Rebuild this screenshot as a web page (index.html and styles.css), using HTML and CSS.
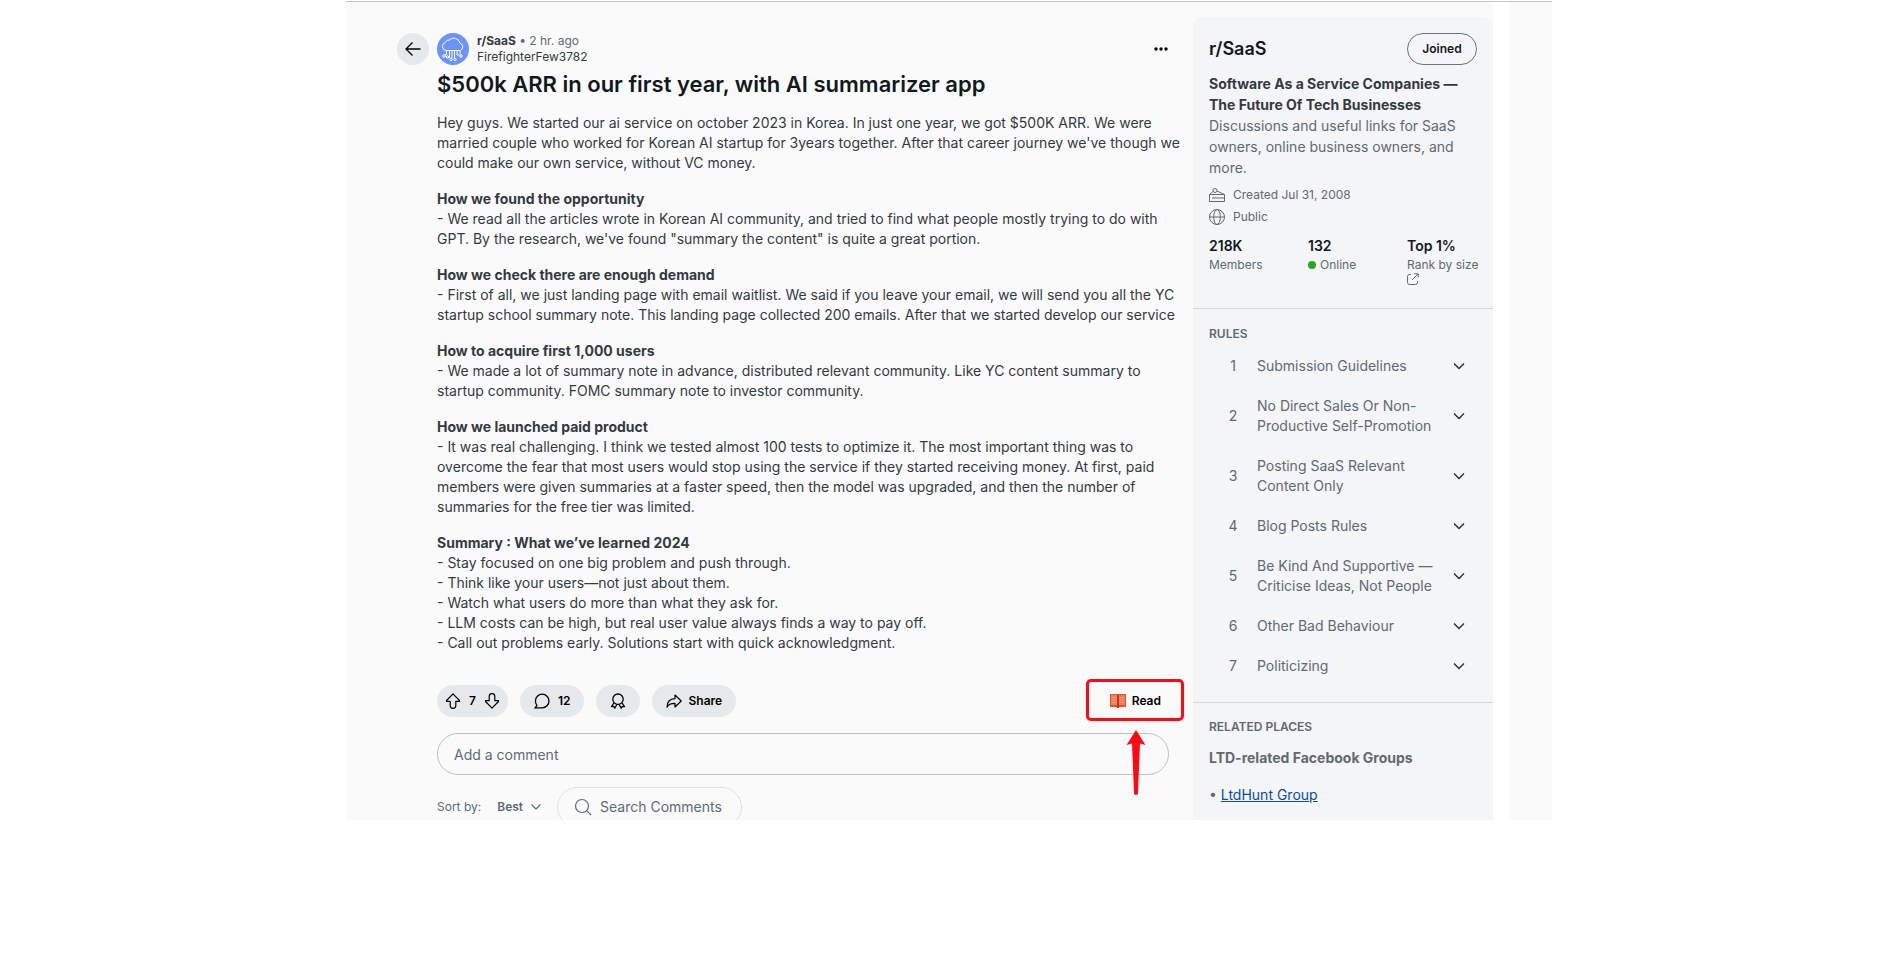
FILE: index.html
```html
<!DOCTYPE html>
<html lang="en">
<head>
<meta charset="utf-8">
<title>$500k ARR in our first year, with AI summarizer app</title>
<link rel="stylesheet" href="styles.css">
</head>
<body>
<div class="panel">
  <main class="main">
    <button class="round-btn" type="button" aria-label="Back">
      <svg width="20" height="20" viewBox="0 0 20 20" fill="none" stroke="currentColor" stroke-width="1.3"><path d="M17.5 10H3M9.5 3.5L3 10l6.500 6.500"/></svg>
    </button>
    <article class="post">
      <header class="post-head">
        <svg class="avatar" width="32" height="32" viewBox="0 0 32 32" fill="none" stroke="#fff" stroke-width="1"><circle cx="16" cy="16" r="16" fill="#6a93fb" stroke="none"/><path d="M9 17.500a4.200 4.200 0 0 1-.5-8.200 3.600 3.600 0 0 1 4-2.300 6 6 0 0 1 10.300 3 4 4 0 0 1 .5 7.500z"/><path d="M9.500 18v3.500H8M12.500 18v7M15 18v7M17.500 18v7M20 18v4h2M23 18v3.500"/><circle cx="7" cy="23" r="1.300"/><circle cx="10.500" cy="24" r="1.200"/><circle cx="14" cy="26.500" r="1.200"/><circle cx="18" cy="26.500" r="1.200"/><circle cx="24" cy="23" r="1.300"/></svg>
        <div class="meta">
          <div><strong>r/SaaS</strong> <span class="muted">• 2 hr. ago</span></div>
          <div>FirefighterFew3782</div>
        </div>
        <button class="more" type="button" aria-label="More options"><svg width="16" height="16" viewBox="0 0 16 16" fill="currentColor"><circle cx="3" cy="8" r="1.700"/><circle cx="8" cy="8" r="1.700"/><circle cx="13" cy="8" r="1.700"/></svg></button>
      </header>
      <h1>$500k ARR in our first year, with AI summarizer app</h1>
      <div class="body">
        <p>Hey guys. We started our ai service on october 2023 in Korea. In just one year, we got $500K ARR. We were<br>married couple who worked for Korean AI startup for 3years together. After that career journey we've though we<br>could make our own service, without VC money.</p>
        <p><strong>How we found the opportunity</strong><br>- We read all the articles wrote in Korean AI community, and tried to find what people mostly trying to do with<br>GPT. By the research, we've found "summary the content" is quite a great portion.</p>
        <p><strong>How we check there are enough demand</strong><br>- First of all, we just landing page with email waitlist. We said if you leave your email, we will send you all the YC<br>startup school summary note. This landing page collected 200 emails. After that we started develop our service</p>
        <p><strong>How to acquire first 1,000 users</strong><br>- We made a lot of summary note in advance, distributed relevant community. Like YC content summary to<br>startup community. FOMC summary note to investor community.</p>
        <p><strong>How we launched paid product</strong><br>- It was real challenging. I think we tested almost 100 tests to optimize it. The most important thing was to<br>overcome the fear that most users would stop using the service if they started receiving money. At first, paid<br>members were given summaries at a faster speed, then the model was upgraded, and then the number of<br>summaries for the free tier was limited.</p>
        <p><strong>Summary : What we’ve learned 2024</strong><br>- Stay focused on one big problem and push through.<br>- Think like your users—not just about them.<br>- Watch what users do more than what they ask for.<br>- LLM costs can be high, but real user value always finds a way to pay off.<br>- Call out problems early. Solutions start with quick acknowledgment.</p>
      </div>
      <div class="actions">
        <div class="pill votes">
          <button type="button" aria-label="Upvote"><svg width="16" height="16" viewBox="0 0 16 16" fill="none" stroke="currentColor" stroke-width="1.200" stroke-linejoin="round"><path d="M8 .8l6.500 6.700v.8h-3.700v4.200a2.800 2.800 0 0 1-5.600 0V8.300H1.500v-.8z"/></svg></button>
          <span>7</span>
          <button type="button" aria-label="Downvote"><svg width="16" height="16" viewBox="0 0 16 16" fill="none" stroke="currentColor" stroke-width="1.200" stroke-linejoin="round"><path d="M8 15.200L1.500 8.500v-.8h3.700V3.500a2.800 2.800 0 0 1 5.600 0v4.200h3.700v.8z"/></svg></button>
        </div>
        <button class="pill" type="button"><svg width="16" height="16" viewBox="0 0 16 16" fill="none" stroke="currentColor" stroke-width="1.300"><path d="M1.200 14.800h7A6.800 6.800 0 1 0 1.400 8c0 1.800.6 3.200 1.500 4.500z"/></svg>12</button>
        <button class="pill" type="button" aria-label="Give award"><svg width="16" height="16" viewBox="0 0 16 16" fill="none" stroke="currentColor" stroke-width="1.300" stroke-linejoin="round"><circle cx="8" cy="6.200" r="5.200"/><path d="M4 9.800l-2.500 3.700 2.300-.2 1 1.900L7 11.300M12 9.800l2.500 3.700-2.300-.2-1 1.900L9 11.300"/></svg></button>
        <button class="pill share" type="button"><svg width="16" height="16" viewBox="0 0 16 16" fill="none" stroke="currentColor" stroke-width="1.200" stroke-linejoin="round"><path d="M9 2l6.200 6L9 14v-3.600c-4 0-6.500.4-8 3.800C1 9.200 3.500 5.800 9 5.600z"/></svg>Share</button>
        <div class="read-wrap">
          <button class="read" type="button"><svg width="16" height="14" viewBox="0 0 16 14"><path d="M0 0h16v13H0z" fill="#e35330"/><path d="M1 1h6v10H1zM9 1h6v10H9z" fill="#f07d55"/><path d="M1.500 3.500h5M1.500 6h5M1.500 8.500h5M9.500 3.500h5M9.500 6h5M9.500 8.500h5" stroke="#f59a78"/><path d="M7 1h2v13H7z" fill="#c93412"/></svg>Read</button>
          <span class="mark"></span>
          <svg class="arrow" width="20" height="66" viewBox="0 0 20 66"><path d="M10 0l9.500 15-5.500-1.500L12 63a2 2 0 0 1-4 0L6 13.500.500 15z" fill="#ff0a14"/></svg>
        </div>
      </div>
      <input class="comment" type="text" placeholder="Add a comment" aria-label="Add a comment">
      <div class="sort">
        <span>Sort by:</span>
        <button class="best" type="button">Best <svg width="10" height="6" viewBox="0 0 10 6" fill="none" stroke="currentColor" stroke-width="1.200"><path d="M.5.5L5 5 9.500.5"/></svg></button>
        <label class="search"><svg width="18" height="18" viewBox="0 0 18 18" fill="none" stroke="currentColor" stroke-width="1.200"><circle cx="8" cy="8" r="6.500"/><path d="M12.800 12.800L17 17"/></svg><input type="text" placeholder="Search Comments" aria-label="Search Comments"></label>
      </div>
    </article>
  </main>
  <aside class="side">
    <section class="about">
      <div class="side-head"><h2>r/SaaS</h2><button class="joined" type="button">Joined</button></div>
      <div class="desc"><strong>Software As a Service Companies —<br>The Future Of Tech Businesses</strong><br>Discussions and useful links for SaaS<br>owners, online business owners, and<br>more.</div>
      <div class="fact"><svg width="16" height="16" viewBox="0 0 16 16" fill="none" stroke="currentColor"><path d="M.5 7.500h15v7H.5zM.5 7.500L4 4.500M8 4l7.500 3.500M3 11h12.500"/><circle cx="6" cy="3.500" r="2"/></svg>Created Jul 31, 2008</div>
      <div class="fact"><svg width="16" height="16" viewBox="0 0 16 16" fill="none" stroke="currentColor"><circle cx="8" cy="8" r="7.500"/><ellipse cx="8" cy="8" rx="3.300" ry="7.500"/><path d="M.5 8h15"/></svg>Public</div>
      <div class="stats">
        <div><b>218K</b><span>Members</span></div>
        <div><b>132</b><span><i class="dot"></i>Online</span></div>
        <div><b>Top 1%</b><span>Rank by size</span><svg width="12" height="12" viewBox="0 0 12 12" fill="none" stroke="currentColor"><path d="M4 1.500H2.500a2 2 0 0 0-2 2v6a2 2 0 0 0 2 2h6a2 2 0 0 0 2-2V8M5 7L11 1M7.500.8h3.700v3.700"/></svg></div>
      </div>
    </section>
    <section class="rules">
      <h3>RULES</h3>
      <ol>
        <li><button type="button"><span class="num">1</span><span class="rule">Submission Guidelines</span><svg class="chev" viewBox="0 0 12 8"><path d="M1 1.500l5 5 5-5"/></svg></button></li>
        <li><button type="button"><span class="num">2</span><span class="rule">No Direct Sales Or Non-<br>Productive Self-Promotion</span><svg class="chev" viewBox="0 0 12 8"><path d="M1 1.500l5 5 5-5"/></svg></button></li>
        <li><button type="button"><span class="num">3</span><span class="rule">Posting SaaS Relevant<br>Content Only</span><svg class="chev" viewBox="0 0 12 8"><path d="M1 1.500l5 5 5-5"/></svg></button></li>
        <li><button type="button"><span class="num">4</span><span class="rule">Blog Posts Rules</span><svg class="chev" viewBox="0 0 12 8"><path d="M1 1.500l5 5 5-5"/></svg></button></li>
        <li><button type="button"><span class="num">5</span><span class="rule">Be Kind And Supportive —<br>Criticise Ideas, Not People</span><svg class="chev" viewBox="0 0 12 8"><path d="M1 1.500l5 5 5-5"/></svg></button></li>
        <li><button type="button"><span class="num">6</span><span class="rule">Other Bad Behaviour</span><svg class="chev" viewBox="0 0 12 8"><path d="M1 1.500l5 5 5-5"/></svg></button></li>
        <li><button type="button"><span class="num">7</span><span class="rule">Politicizing</span><svg class="chev" viewBox="0 0 12 8"><path d="M1 1.500l5 5 5-5"/></svg></button></li>
      </ol>
    </section>
    <section class="related">
      <h3>RELATED PLACES</h3>
      <h4>LTD-related Facebook Groups</h4>
      <p>• <a href="#ltdhunt">LtdHunt Group</a></p>
    </section>
  </aside>
  <div class="gutter"></div>
</div>
</body>
</html>
```
FILE: styles.css
```css
* { box-sizing: border-box; margin: 0; padding: 0; }
body { background: #fff; color: #333a3f; font: 14px/20px Inter, "Liberation Sans", sans-serif; }
button, input { font: inherit; color: inherit; background: none; border: 0; }
svg { flex: none; }
.panel { display: flex; max-width: 1206px; margin: 1px auto 0; padding-right: 43px; background: #fafafa; border-top: 1px solid #c5c8c9; }
.main { flex: 1; min-width: 0; display: flex; gap: 8px; padding: 31px 24px 0 51px; }
.round-btn { display: flex; flex: none; align-items: center; justify-content: center; width: 32px; height: 32px; border-radius: 16px; background: #e5e9eb; color: #000; }
.post { flex: 1; min-width: 0; }
.post-head { display: flex; align-items: center; gap: 8px; height: 32px; }
.meta { flex: 1; font-size: 12px; line-height: 16px; white-space: nowrap; }
.muted { color: #5f6a70; }
.more { display: flex; color: #000; }
h1 { margin-top: 4px; font-size: 22px; line-height: 30px; font-weight: 600; color: #0f1a1c; white-space: nowrap; }
.body { margin-top: 14px; white-space: nowrap; }
.body p + p { margin-top: 16px; }
.actions { display: flex; gap: 12px; margin-top: 32px; font-size: 12px; font-weight: 600; color: #000; }
.pill { display: flex; align-items: center; gap: 8px; height: 32px; padding: 0 14px; border-radius: 16px; background: #e5e9eb; }
.share { gap: 6px; }
.votes { padding: 0 8px; }
.votes button { display: flex; }
.read-wrap { position: relative; margin-left: auto; }
.read { display: flex; align-items: center; gap: 6px; height: 32px; padding: 0 8px; }
.mark { position: absolute; inset: -6px -15px -4px -16px; border: 3px solid #ff0a14; border-radius: 5px; }
.arrow { position: absolute; right: 23px; top: 45px; }
.comment { display: block; width: 100%; height: 42px; margin-top: 16px; padding: 0 16px; border: 1px solid #bfc2c4; border-radius: 21px; }
input::placeholder { color: #5c6c74; opacity: 1; }
.sort { display: flex; align-items: flex-start; height: 33px; margin-top: 12px; overflow: hidden; font-size: 12px; line-height: 40px; color: #5c6c74; }
.best { display: flex; align-items: center; gap: 8px; margin: 0 16px; font-weight: 600; }
.search { display: flex; align-items: center; gap: 8px; width: 185px; height: 40px; padding: 0 16px; border: 1px solid #dfe2e4; border-radius: 20px; font-size: 14px; }
.search input { flex: 1; min-width: 0; }

.side { flex: none; width: 300px; margin-top: 15px; border-radius: 8px 8px 0 0; background: #f4f5f7; color: #5f6a70; }
.about { padding: 16px 16px 23px; border-bottom: 1px solid #d6d9db; }
.side-head { display: flex; align-items: center; justify-content: space-between; height: 32px; }
h2 { font-size: 18px; line-height: 24px; font-weight: 600; color: #0f1a1c; }
.joined { width: 70px; height: 32px; border: 1px solid #6c7478; border-radius: 16px; font-size: 12px; font-weight: 600; color: #0f1a1c; }
.desc { margin: 8px 0 6px; line-height: 21px; white-space: nowrap; }
.desc strong { color: #333a3f; }
.fact { display: flex; align-items: center; gap: 8px; height: 22px; font-size: 12px; }
.stats { display: grid; grid-template-columns: 1fr 1fr 70px; margin-top: 8px; font-size: 12px; line-height: 17px; }
.stats b, .stats span { display: block; white-space: nowrap; }
.stats b { font-size: 14px; line-height: 20px; font-weight: 600; color: #0f1a1c; }
.stats svg { display: block; }
.dot { display: inline-block; width: 8px; height: 8px; margin-right: 4px; border-radius: 4px; background: #25a822; }
.rules { padding: 17px 16px 16px; border-bottom: 1px solid #d6d9db; }
h3 { font-size: 12px; line-height: 16px; font-weight: 600; }
ol { margin-top: 4px; list-style: none; }
li button { display: flex; align-items: center; width: 100%; padding: 10px 12px 10px 16px; text-align: left; }
.num { width: 16px; text-align: center; }
.rule { flex: 1; min-width: 0; margin-left: 16px; white-space: nowrap; }
.chev { width: 12px; height: 8px; fill: none; stroke: #1f2a2e; stroke-width: 1.300; }
.related { padding: 16px 16px 0; }
h4 { margin: 13px 0 17px; font-size: 14px; line-height: 20px; }
a { color: #0a4da8; }
.gutter { flex: none; width: 16px; background: #fff; }
```
